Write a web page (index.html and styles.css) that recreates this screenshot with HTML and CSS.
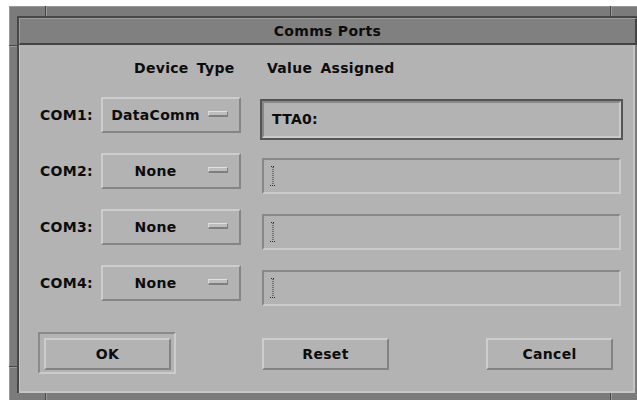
FILE: index.html
```html
<!DOCTYPE html>
<html>
<head>
<meta charset="utf-8">
<title>Comms Ports</title>
<link rel="stylesheet" href="styles.css">
</head>
<body>
<div class="wm">
  <span class="grip grip-v grip-top grip-left"></span>
  <span class="grip grip-v grip-top grip-right"></span>
  <span class="grip grip-v grip-bottom grip-left"></span>
  <span class="grip grip-v grip-bottom grip-right"></span>
  <span class="grip grip-h grip-upper"></span>
  <span class="grip grip-h grip-lower"></span>
  <div class="client">
    <div class="titlebar">Comms Ports</div>
    <div class="dialog">
      <div class="ports">
        <div></div>
        <div class="head head-type">Device Type</div>
        <div class="head head-value">Value Assigned</div>

        <div class="lbl">COM1:</div>
        <div class="opt"><span class="opt-text">DataComm</span><span class="ind"></span></div>
        <div class="field focus"><span class="value">TTA0:</span></div>

        <div class="lbl">COM2:</div>
        <div class="opt"><span class="opt-text">None</span><span class="ind"></span></div>
        <div class="field"><svg class="ibeam" width="8" height="20" viewBox="0 0 8 20"><path d="M2 0.5H6M4 1V19M1 19.5H7" stroke="#2a2a2a" stroke-width="1" stroke-dasharray="1 1" fill="none"/></svg></div>

        <div class="lbl">COM3:</div>
        <div class="opt"><span class="opt-text">None</span><span class="ind"></span></div>
        <div class="field"><svg class="ibeam" width="8" height="20" viewBox="0 0 8 20"><path d="M2 0.5H6M4 1V19M1 19.5H7" stroke="#2a2a2a" stroke-width="1" stroke-dasharray="1 1" fill="none"/></svg></div>

        <div class="lbl">COM4:</div>
        <div class="opt"><span class="opt-text">None</span><span class="ind"></span></div>
        <div class="field"><svg class="ibeam" width="8" height="20" viewBox="0 0 8 20"><path d="M2 0.5H6M4 1V19M1 19.5H7" stroke="#2a2a2a" stroke-width="1" stroke-dasharray="1 1" fill="none"/></svg></div>
      </div>
      <div class="actions">
        <div class="default-ring"><div class="btn">OK</div></div>
        <div class="btn btn-reset">Reset</div>
        <div class="btn btn-cancel">Cancel</div>
      </div>
    </div>
  </div>
</div>
</body>
</html>
```
FILE: styles.css
```css
html, body {
  margin: 0;
  padding: 0;
  background: #ffffff;
  overflow: hidden;
}

body {
  width: 637px;
  height: 400px;
  font-family: "DejaVu Sans", "Liberation Sans", sans-serif;
  font-weight: bold;
  font-size: 14px;
  letter-spacing: 0.3px;
  color: #0c0c0c;
}

/* window manager frame */
.wm {
  position: relative;
  box-sizing: border-box;
  margin: 6px 0 0 9px;
  width: 628px;
  height: 394px;
  padding: 9px 0 0 7px;
  background: #7b7b7b;
  border-top: 1px solid #999999;
  border-left: 1px solid #999999;
}

/* resize-corner marks cut into the frame */
.grip {
  position: absolute;
  background: #474747;
}
.grip-v {
  width: 1px;
  box-shadow: 1px 0 0 #9a9a9a;
}
.grip-h {
  height: 1px;
  left: -1px;
  width: 8px;
  box-shadow: 0 1px 0 #9a9a9a;
}
.grip-top { top: -1px; height: 10px; }
.grip-bottom { top: 386px; height: 8px; }
.grip-left { left: 35px; }
.grip-right { left: 600px; }
.grip-upper { top: 38px; }
.grip-lower { top: 359px; }

.client {
  box-sizing: border-box;
  width: 620px;
  height: 377px;
  border-top: 2px solid #474747;
  border-left: 2px solid #474747;
  display: flex;
  flex-direction: column;
}

.titlebar {
  box-sizing: border-box;
  height: 27px;
  background: #808080;
  border-top: 1px solid #9c9c9c;
  border-left: 1px solid #9c9c9c;
  border-bottom: 2px solid #444444;
  border-right: 2px solid #444444;
  display: flex;
  align-items: center;
  justify-content: center;
  line-height: 16px;
}

.dialog {
  box-sizing: border-box;
  flex: 1;
  margin-right: 2px;
  background: #b3b3b3;
  border-left: 1px solid #c4c4c4;
  border-right: 2px solid #c6c6c6;
  border-bottom: 2px solid #c6c6c6;
  padding: 15px 0 0 20px;
}

/* port rows */
.ports {
  display: grid;
  grid-template-columns: 61px 140px 380px;
  grid-template-rows: 17px repeat(4, 36px);
  row-gap: 20px;
  align-items: center;
}

.head {
  line-height: 17px;
  white-space: nowrap;
  word-spacing: 3px;
}
.head-type { padding-left: 33px; }
.head-value { padding-left: 26px; }

.lbl {
  line-height: 17px;
}

.opt {
  box-sizing: border-box;
  height: 36px;
  display: flex;
  align-items: center;
  background: #b3b3b3;
  border-top: 2px solid #cdcdcd;
  border-left: 2px solid #cdcdcd;
  border-bottom: 2px solid #858585;
  border-right: 2px solid #858585;
  padding-right: 11px;
}
.opt-text {
  flex: 1;
  text-align: center;
  line-height: 17px;
}
.ind {
  box-sizing: border-box;
  width: 20px;
  height: 6px;
  background: #bebebe;
  border-top: 1px solid #e2e2e2;
  border-left: 1px solid #dadada;
  border-bottom: 2px solid #7e7e7e;
  border-right: 1px solid #7e7e7e;
  margin-top: -2px;
}

.field {
  box-sizing: border-box;
  align-self: start;
  margin: 5px 0 0 21px;
  width: 359px;
  height: 36px;
  background: #b3b3b3;
  border-top: 2px solid #888888;
  border-left: 2px solid #888888;
  border-bottom: 2px solid #cacaca;
  border-right: 2px solid #cacaca;
  padding: 6px 0 0 5px;
}
.field.focus {
  margin-top: 4px;
  height: 37px;
  box-shadow: 0 0 0 2px #555555;
  padding: 0 0 0 8px;
  display: flex;
  align-items: center;
}
.value {
  line-height: 17px;
}
.ibeam {
  display: block;
}

/* dialog buttons */
.actions {
  display: flex;
  align-items: flex-start;
  margin: 31px 0 0 -2px;
}

.default-ring {
  border-top: 2px solid #8a8a8a;
  border-left: 2px solid #8a8a8a;
  border-bottom: 2px solid #cccccc;
  border-right: 2px solid #cccccc;
  padding: 4px 3px 2px 4px;
}

.btn {
  box-sizing: border-box;
  width: 127px;
  height: 32px;
  display: flex;
  align-items: center;
  justify-content: center;
  background: #b3b3b3;
  border-top: 2px solid #cdcdcd;
  border-left: 2px solid #cdcdcd;
  border-bottom: 2px solid #838383;
  border-right: 2px solid #838383;
  line-height: 17px;
}
.btn-reset { margin: 6px 0 0 86px; }
.btn-cancel { margin: 6px 0 0 97px; }
```
